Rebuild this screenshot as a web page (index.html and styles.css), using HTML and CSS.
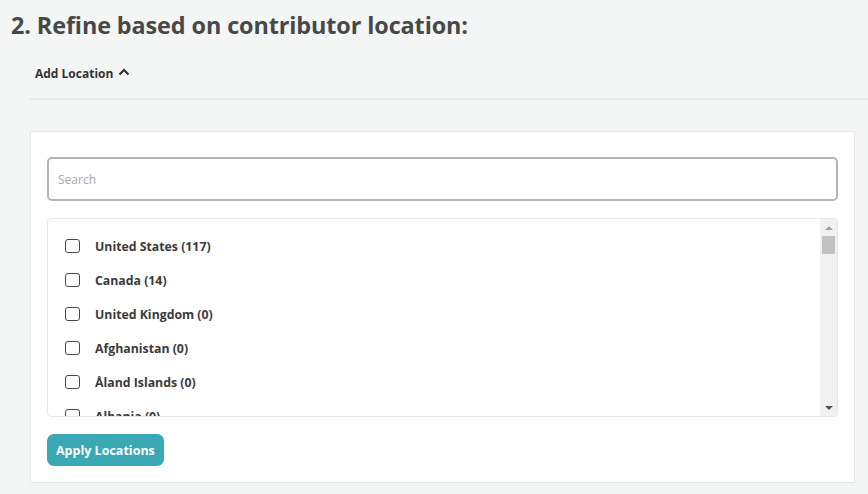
FILE: index.html
```html
<!DOCTYPE html>
<html lang="en">
<head>
<meta charset="utf-8">
<title>Refine based on contributor location</title>
<link rel="stylesheet" href="styles.css">
</head>
<body>
<h2 class="title">2. Refine based on contributor location:</h2>
<div class="section">
  <div class="toggle">
    <span class="toggle-label">Add Location</span>
    <svg class="caret" width="12" height="8" viewBox="0 0 12 8"><path d="M1.5 6.5 L6 2 L10.5 6.5" fill="none" stroke="#333" stroke-width="2.2"/></svg>
  </div>
  <div class="divider"></div>
  <div class="card">
    <input class="search" type="text" placeholder="Search">
    <div class="list">
      <ul class="items">
        <li class="row"><span class="box"></span><span class="name">United States (117)</span></li>
        <li class="row"><span class="box"></span><span class="name">Canada (14)</span></li>
        <li class="row"><span class="box"></span><span class="name">United Kingdom (0)</span></li>
        <li class="row"><span class="box"></span><span class="name">Afghanistan (0)</span></li>
        <li class="row"><span class="box"></span><span class="name">Åland Islands (0)</span></li>
        <li class="row"><span class="box"></span><span class="name">Albania (0)</span></li>
        <li class="row"><span class="box"></span><span class="name">Algeria (0)</span></li>
      </ul>
      <div class="scrollbar">
        <div class="sb-btn"><span class="arrow-up"></span></div>
        <div class="sb-track"><div class="sb-thumb"></div></div>
        <div class="sb-btn"><span class="arrow-down"></span></div>
      </div>
    </div>
    <div class="actions"><button class="apply" type="button">Apply Locations</button></div>
  </div>
</div>
</body>
</html>
```
FILE: styles.css
```css
html, body {
  margin: 0;
  padding: 0;
  background: #f4f5f5;
  font-family: "Open Sans", "Lato", sans-serif;
  overflow: hidden;
}
.title {
  margin: 0;
  padding: 9px 0 0 11px;
  font-size: 23.4px;
  line-height: 32px;
  font-weight: 700;
  color: #484848;
  letter-spacing: -0.1px;
}
.section {
  padding: 0 13px 0 30px;
}
.toggle {
  display: flex;
  align-items: center;
  gap: 5px;
  padding: 24px 0 0 5px;
  height: 16px;
}
.toggle-label {
  font-size: 12px;
  font-weight: 700;
  color: #333;
}
.caret {
  display: block;
  margin-top: -3px;
}
.divider {
  height: 2px;
  background: #e8e9e9;
  margin: 17px -13px 0 0;
}
.card {
  margin-top: 31px;
  background: #fff;
  border: 1px solid #e6e7e7;
  padding: 25px 16px 16px 16px;
  display: flex;
  flex-direction: column;
}
.search {
  box-sizing: border-box;
  height: 44px;
  width: 791px;
  border: 2px solid #b4b4b4;
  border-radius: 5px;
  padding: 0 9px;
  font-family: inherit;
  font-size: 12px;
  color: #333;
  outline: none;
}
.search::placeholder {
  color: #a7a7a7;
}
.list {
  display: flex;
  margin-top: 17px;
  height: 197px;
  width: 789px;
  border: 1px solid #e8e8e8;
  border-radius: 4px;
  overflow: hidden;
}
.items {
  flex: 1;
  list-style: none;
  margin: 0;
  padding: 10px 0 0 0;
  overflow: hidden;
}
.scrollbar {
  width: 17px;
  flex: none;
  display: flex;
  flex-direction: column;
  background: #f1f1f1;
}
.sb-btn {
  height: 17px;
  display: flex;
  align-items: center;
  justify-content: center;
}
.arrow-up {
  width: 0;
  height: 0;
  border-left: 4px solid transparent;
  border-right: 4px solid transparent;
  border-bottom: 4px solid #a3a3a3;
}
.arrow-down {
  width: 0;
  height: 0;
  border-left: 4px solid transparent;
  border-right: 4px solid transparent;
  border-top: 4px solid #505050;
}
.sb-track {
  flex: 1;
  padding: 0 2px;
}
.sb-thumb {
  height: 18px;
  background: #c1c1c1;
}
.row {
  display: flex;
  align-items: center;
  height: 34px;
  padding-left: 17px;
}
.box {
  box-sizing: border-box;
  width: 15px;
  height: 14px;
  border: 1.5px solid #4a4a4a;
  border-radius: 3px;
  flex: none;
}
.name {
  margin-left: 15px;
  font-size: 12.3px;
  font-weight: 700;
  color: #3b3b3b;
  white-space: nowrap;
}
.actions {
  display: flex;
  margin-top: 17px;
}
.apply {
  height: 32px;
  padding: 0 9px;
  border: none;
  border-radius: 7px;
  background: #3aa8b5;
  color: #fff;
  font-family: inherit;
  font-size: 12.5px;
  font-weight: 700;
}
```
